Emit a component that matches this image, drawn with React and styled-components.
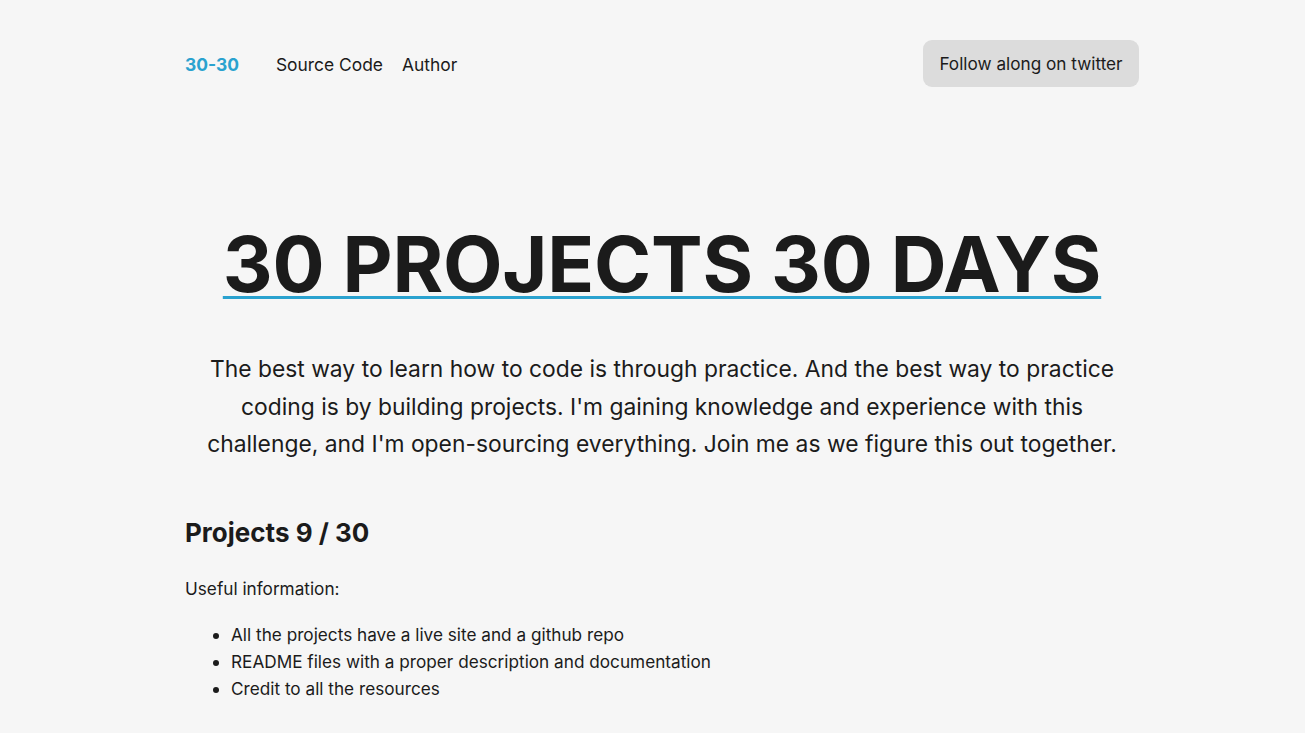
import React from "react";
import styled, { createGlobalStyle } from "styled-components";

const GlobalStyle = createGlobalStyle`
  html, body {
    margin: 0;
    padding: 0;
    background: #f6f6f6;
    font-family: Inter, "Noto Sans", sans-serif;
    color: #1b1b1b;
  }
`;

const Page = styled.div`
  padding-left: 19px;
`;

const Container = styled.div`
  width: 954px;
  margin: 0 auto;
`;

const Nav = styled.nav`
  display: flex;
  align-items: center;
  justify-content: space-between;
  padding-top: 40px;
  height: 47px;
`;

const NavLinks = styled.div`
  display: flex;
  align-items: center;
  gap: 19px;
  font-size: 17.4px;
  padding-top: 1px;
`;

const Brand = styled.a`
  color: #2aa2cf;
  font-weight: 700;
  margin-right: 18px;
  text-decoration: none;
`;

const NavLink = styled.a`
  color: #1b1b1b;
  text-decoration: none;
`;

const TwitterButton = styled.button`
  width: 216px;
  height: 47px;
  border: none;
  border-radius: 9px;
  background: #dcdcdc;
  color: #1b1b1b;
  font-family: inherit;
  font-size: 17.2px;
  padding-top: 1px;
  cursor: pointer;
`;

const Hero = styled.header`
  text-align: center;
  padding-top: 131px;
`;

const Title = styled.h1`
  margin: 0;
  font-size: 77.3px;
  font-weight: 700;
  line-height: 92px;
  letter-spacing: -0.2px;
  text-decoration: underline;
  text-decoration-color: #2aa2cf;
  text-decoration-thickness: 3px;
  text-underline-offset: 4px;
`;

const Intro = styled.p`
  margin: 41px auto 0;
  max-width: 930px;
  font-size: 22.85px;
  line-height: 37.7px;
`;

const Section = styled.section`
  padding-top: 52px;
`;

const SectionTitle = styled.h2`
  margin: 0;
  font-size: 26px;
  font-weight: 700;
  line-height: 34px;
`;

const Text = styled.p`
  margin: 25px 0 0;
  font-size: 17.2px;
  line-height: 27px;
`;

const List = styled.ul`
  margin: 19px 0 0;
  padding-left: 46px;
  font-size: 17.2px;
  line-height: 27px;
`;

const items = [
  "All the projects have a live site and a github repo",
  "README files with a proper description and documentation",
  "Credit to all the resources",
];

export default function App() {
  return (
    <Page>
      <GlobalStyle />
      <Container>
        <Nav>
          <NavLinks>
            <Brand href="#">30-30</Brand>
            <NavLink href="#">Source Code</NavLink>
            <NavLink href="#">Author</NavLink>
          </NavLinks>
          <TwitterButton>Follow along on twitter</TwitterButton>
        </Nav>
        <Hero>
          <Title>30 PROJECTS 30 DAYS</Title>
          <Intro>
            The best way to learn how to code is through practice. And the best way to practice
            coding is by building projects. I'm gaining knowledge and experience with this
            challenge, and I'm open-sourcing everything. Join me as we figure this out together.
          </Intro>
        </Hero>
        <Section>
          <SectionTitle>Projects 9 / 30</SectionTitle>
          <Text>Useful information:</Text>
          <List>
            {items.map((item) => (
              <li key={item}>{item}</li>
            ))}
          </List>
        </Section>
      </Container>
    </Page>
  );
}
